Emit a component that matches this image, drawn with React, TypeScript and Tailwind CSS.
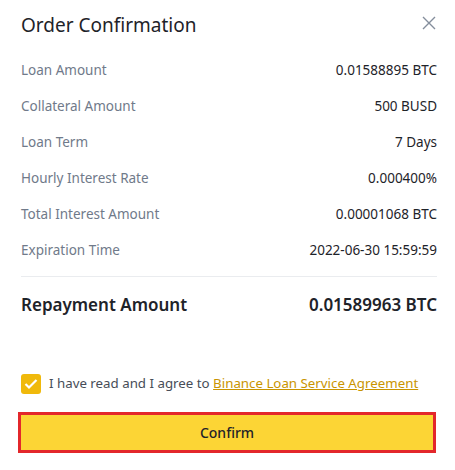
const rows: [string, string][] = [
  ["Loan Amount", "0.01588895 BTC"],
  ["Collateral Amount", "500 BUSD"],
  ["Loan Term", "7 Days"],
  ["Hourly Interest Rate", "0.000400%"],
  ["Total Interest Amount", "0.00001068 BTC"],
  ["Expiration Time", "2022-06-30 15:59:59"],
];

export default function App() {
  return (
    <div
      className="w-[455px] h-[470px] bg-white pl-[21px] pr-[18px] text-[#1E2329]"
      style={{ fontFamily: '"Noto Sans", "Open Sans", sans-serif' }}
    >
      <div className="h-[50px] flex items-center justify-between">
        <h1 className="text-[19px] font-normal leading-none">Order Confirmation</h1>
        <svg width="14" height="14" viewBox="0 0 14 14" className="mr-[1px] -mt-[5px]">
          <path d="M1 1L13 13M13 1L1 13" stroke="#848E9C" strokeWidth="1.4" />
        </svg>
      </div>

      <div className="mt-[2px]">
        {rows.map(([label, value]) => (
          <div key={label} className="h-[36px] flex items-center justify-between text-[13.5px]">
            <span className="text-[#707A8A]">{label}</span>
            <span>{value}</span>
          </div>
        ))}
      </div>

      <div className="mt-[8px] border-t border-[#EAECEF]" />

      <div className="h-[56px] flex items-center justify-between text-[17px] font-semibold">
        <span>Repayment Amount</span>
        <span>0.01589963 BTC</span>
      </div>

      <div className="mt-[41px] h-[20px] flex items-center gap-[8px] text-[13.3px] whitespace-nowrap">
        <span className="shrink-0 w-[20px] h-[20px] rounded-[3px] bg-[#F0B90B] flex items-center justify-center">
          <svg width="14" height="12" viewBox="0 0 14 12">
            <path d="M1.5 6L5 9.5L12.5 2" stroke="white" strokeWidth="2.2" fill="none" />
          </svg>
        </span>
        <span className="text-[#474D57]">
          I have read and I agree to{" "}
          <a className="text-[#C99400] underline">Binance Loan Service Agreement</a>
        </span>
      </div>

      <button className="mt-[18px] -ml-[3px] w-[418px] h-[41px] bg-[#FCD535] border-[3px] border-[#E3272B] text-[14px] font-medium text-[#1E2329] flex items-center justify-center">
        Confirm
      </button>
    </div>
  );
}
